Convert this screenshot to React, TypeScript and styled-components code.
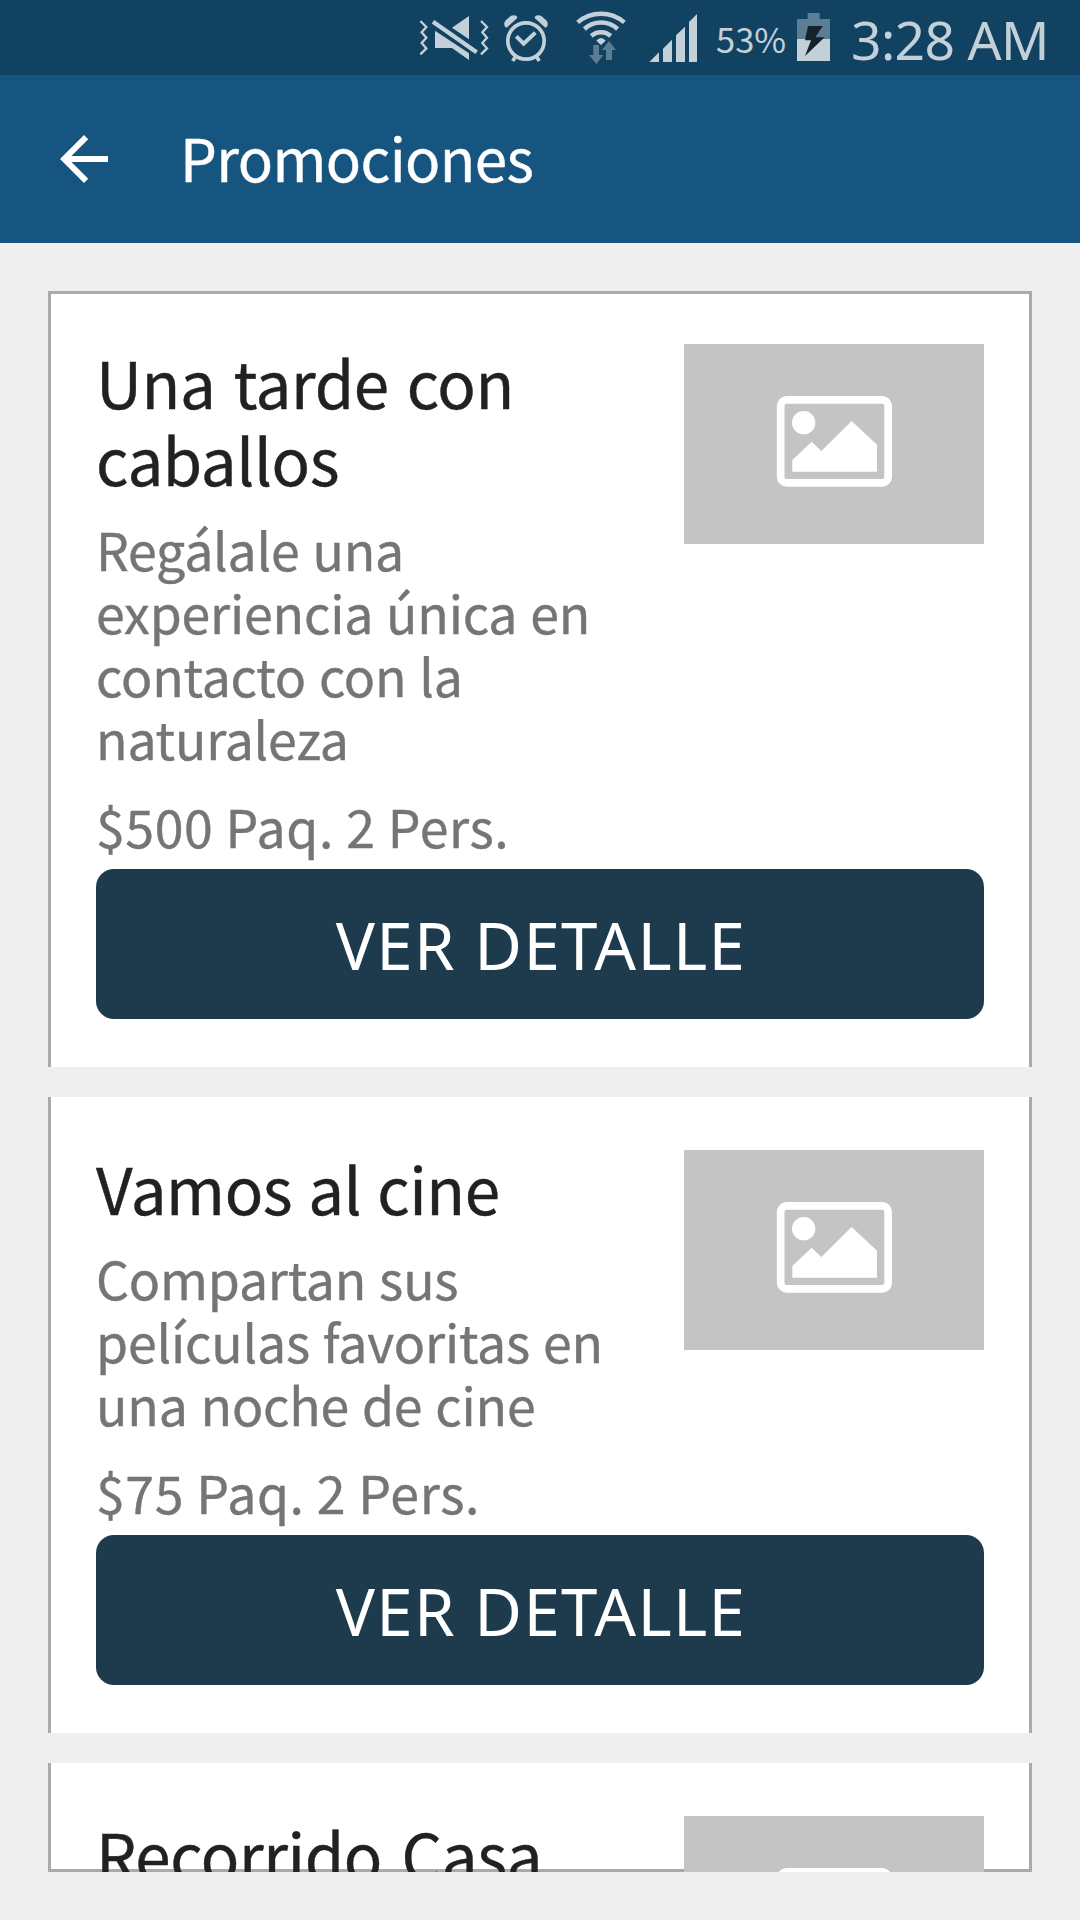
import React from 'react';
import styled, { createGlobalStyle } from 'styled-components';

const GlobalStyle = createGlobalStyle`
  * { box-sizing: border-box; }
  body {
    margin: 0;
    background: #efefef;
    font-family: "Noto Sans CJK JP", "Noto Sans", sans-serif;
  }
`;

const ICON = '#c3d0d8';
const ICON_DIM = '#5b7e95';

const Screen = styled.div`
  display: flex;
  flex-direction: column;
  width: 1080px;
  height: 1920px;
  overflow: hidden;
  background: #efefef;
`;

const StatusBar = styled.header`
  display: flex;
  align-items: center;
  flex: none;
  height: 75px;
  padding-left: 418px;
  background: #124262;
  color: ${ICON};
  white-space: nowrap;
`;

const StatusIcon = styled.svg<{ $width: number; $gap?: number }>`
  display: block;
  flex: none;
  width: ${p => p.$width}px;
  height: 75px;
  margin-left: ${p => p.$gap ?? 0}px;
`;

const BatteryLevel = styled.span`
  flex: none;
  width: 81px;
  margin-left: 18px;
  padding-top: 1px;
  font-size: 34.5px;
  line-height: 50px;
`;

const Clock = styled.span`
  margin-left: 21px;
  padding-top: 4px;
  font-family: "Noto Sans", sans-serif;
  font-size: 53.4px;
  line-height: 71px;
  letter-spacing: -0.65px;
`;

const AppBar = styled.nav`
  display: flex;
  align-items: center;
  flex: none;
  height: 168px;
  padding-left: 48px;
  background: #16557f;
  color: #fff;
`;

const BackButton = styled.button`
  display: flex;
  width: 72px;
  height: 72px;
  margin: 0;
  padding: 0;
  border: 0;
  background: none;
  color: inherit;
`;

const AppTitle = styled.h1`
  margin: 0 0 0 60px;
  padding-bottom: 4px;
  font-size: 58.3px;
  font-weight: 400;
  line-height: 80px;
  letter-spacing: -0.6px;
  -webkit-text-stroke: 0.4px currentColor;
`;

const PromoList = styled.main`
  flex: 1;
  min-height: 0;
  margin: 48px;
  overflow: hidden;
  background: #fff;
  box-shadow: inset 0 0 0 3px #aaa;
`;

const Separator = styled.div`
  height: 30px;
  background: #efefef;
`;

const Card = styled.article`
  display: flex;
  flex-direction: column;
  padding: 52px 48px 48px;
`;

const CardTop = styled.div`
  display: flex;
  justify-content: space-between;
  align-items: flex-start;
`;

const CardText = styled.div`
  width: 540px;
`;

const Title = styled.h2<{ $wordGap: number }>`
  margin: 0 0 20px;
  font-size: 63.7px;
  font-weight: 400;
  line-height: 77px;
  letter-spacing: -0.4px;
  word-spacing: ${p => p.$wordGap}px;
  color: #212121;
  -webkit-text-stroke: 0.4px currentColor;
`;

const Description = styled.p`
  margin: 0 0 25px;
  font-size: 51.8px;
  line-height: 63px;
  letter-spacing: -0.2px;
  word-spacing: 1.5px;
  color: #757575;
  -webkit-text-stroke: 0.4px currentColor;
`;

const Price = styled.p`
  margin: 0 0 12px;
  font-size: 51.8px;
  line-height: 63px;
  letter-spacing: 0.6px;
  color: #757575;
  -webkit-text-stroke: 0.4px currentColor;
`;

const Thumb = styled.div`
  flex: none;
  width: 300px;
  height: 200px;
  margin-top: 1px;
  background: #c4c4c4;
`;

const DetailButton = styled.button`
  height: 150px;
  margin: 0;
  padding: 1px 0 0 2px;
  border: 0;
  border-radius: 18px;
  background: #1e3a4d;
  color: #fff;
  font-family: "Noto Sans", sans-serif;
  font-size: 65.4px;
  line-height: 90px;
  letter-spacing: 1.35px;
`;

interface Promo {
  title: string;
  wordGap: number;
  description: string;
  price: string;
}

const promos: Promo[] = [
  {
    title: 'Una tarde con caballos',
    wordGap: 4.2,
    description: 'Regálale una experiencia única en contacto con la naturaleza',
    price: '$500 Paq. 2 Pers.',
  },
  {
    title: 'Vamos al cine',
    wordGap: 2,
    description: 'Compartan sus películas favoritas en una noche de cine',
    price: '$75 Paq. 2 Pers.',
  },
  { title: 'Recorrido Casa', wordGap: 5.7, description: '', price: '' },
];

const MuteIcon = () => (
  <StatusIcon $width={72} viewBox="24 0 216 225">
    <g fill="none" stroke={ICON} strokeWidth="7">
      <path d="M31 63L49 81L35 97L49 113L35 129L49 145L31 163" />
      <path d="M213 63L231 81L217 97L231 113L217 129L231 145L213 163" />
    </g>
    <path d="M69 65L200 157" stroke={ICON} strokeWidth="13" />
    <path d="M177 48V118L126 83ZM75 92V144H126L177 180V160Z" fill={ICON} />
  </StatusIcon>
);

const AlarmIcon = () => (
  <StatusIcon $width={46} $gap={13} viewBox="279 0 138 225">
    <circle cx="348" cy="123" r="54.5" fill="none" stroke={ICON} strokeWidth="11" />
    <g fill={ICON}>
      <path d="M285 80Q280 70 286 62L302 48Q310 43 320 48L322 54L290 83Z" />
      <path d="M411 80Q416 70 410 62L394 48Q386 43 376 48L374 54L406 83Z" />
    </g>
    <path d="M319 109L341 131L376 98" fill="none" stroke={ICON} strokeWidth="12" />
    <path d="M318 168L308 183M378 168L388 183" stroke={ICON} strokeWidth="11" />
  </StatusIcon>
);

const WifiIcon = () => (
  <StatusIcon $width={50} $gap={27} viewBox="498 0 150 225">
    <g fill="none" stroke={ICON} strokeWidth="13.5">
      <path d="M503 67A107 107 0 0 1 643 67" />
      <path d="M523 87A74 74 0 0 1 623 87" />
      <path d="M544 108A43 43 0 0 1 602 108" />
    </g>
    <path d="M559 122Q573 106 587 122L573 135Z" fill={ICON} />
    <path
      d="M550 135H567V165H580L559 192L537 165H550ZM588 180V150H576L597 123L618 150H606V180Z"
      fill={ICON_DIM}
    />
  </StatusIcon>
);

const SignalIcon = () => (
  <StatusIcon $width={49} $gap={23} viewBox="57 0 147 225">
    <path
      d="M58 186L87 157V186ZM99 186V146L126 119V186ZM138 186V106L165 80V186ZM177 186V66L201 42V186Z"
      fill={ICON}
    />
  </StatusIcon>
);

const BatteryIcon = () => (
  <StatusIcon $width={33} viewBox="51 0 99 225">
    <path d="M51 57H83V39H119V57H150V117H51Z" fill={ICON_DIM} />
    <path d="M51 117H150V183H51Z" fill={ICON} />
    <path d="M84 78H128L106 112H134L75 168L93 121H75Z" fill="#15222b" />
  </StatusIcon>
);

const PictureIcon = () => (
  <svg width="300" height="200" viewBox="0 0 900 600" display="block" fill="#fff">
    <rect x="290" y="167.5" width="322.5" height="249" rx="18" fill="none" stroke="#fff" strokeWidth="23" />
    <circle cx="359" cy="236" r="35" />
    <path d="M325 348L383 293L412 321L503 231L579 302V383H325Z" />
  </svg>
);

const PromoCard = ({ promo }: { promo: Promo }) => (
  <Card>
    <CardTop>
      <CardText>
        <Title $wordGap={promo.wordGap}>{promo.title}</Title>
        {promo.description && <Description>{promo.description}</Description>}
        {promo.price && <Price>{promo.price}</Price>}
      </CardText>
      <Thumb>
        <PictureIcon />
      </Thumb>
    </CardTop>
    {promo.price && <DetailButton>VER DETALLE</DetailButton>}
  </Card>
);

export default function App() {
  return (
    <Screen>
      <GlobalStyle />
      <StatusBar>
        <MuteIcon />
        <AlarmIcon />
        <WifiIcon />
        <SignalIcon />
        <BatteryLevel>53%</BatteryLevel>
        <BatteryIcon />
        <Clock>3:28 AM</Clock>
      </StatusBar>
      <AppBar>
        <BackButton aria-label="Atrás">
          <svg width="72" height="72" viewBox="0 0 24 24" fill="currentColor">
            <path d="M20 11H7.83l5.59-5.59L12 4l-8 8 8 8 1.41-1.41L7.83 13H20v-2z" />
          </svg>
        </BackButton>
        <AppTitle>Promociones</AppTitle>
      </AppBar>
      <PromoList>
        {promos.map((promo, i) => (
          <React.Fragment key={promo.title}>
            {i > 0 && <Separator />}
            <PromoCard promo={promo} />
          </React.Fragment>
        ))}
      </PromoList>
    </Screen>
  );
}
